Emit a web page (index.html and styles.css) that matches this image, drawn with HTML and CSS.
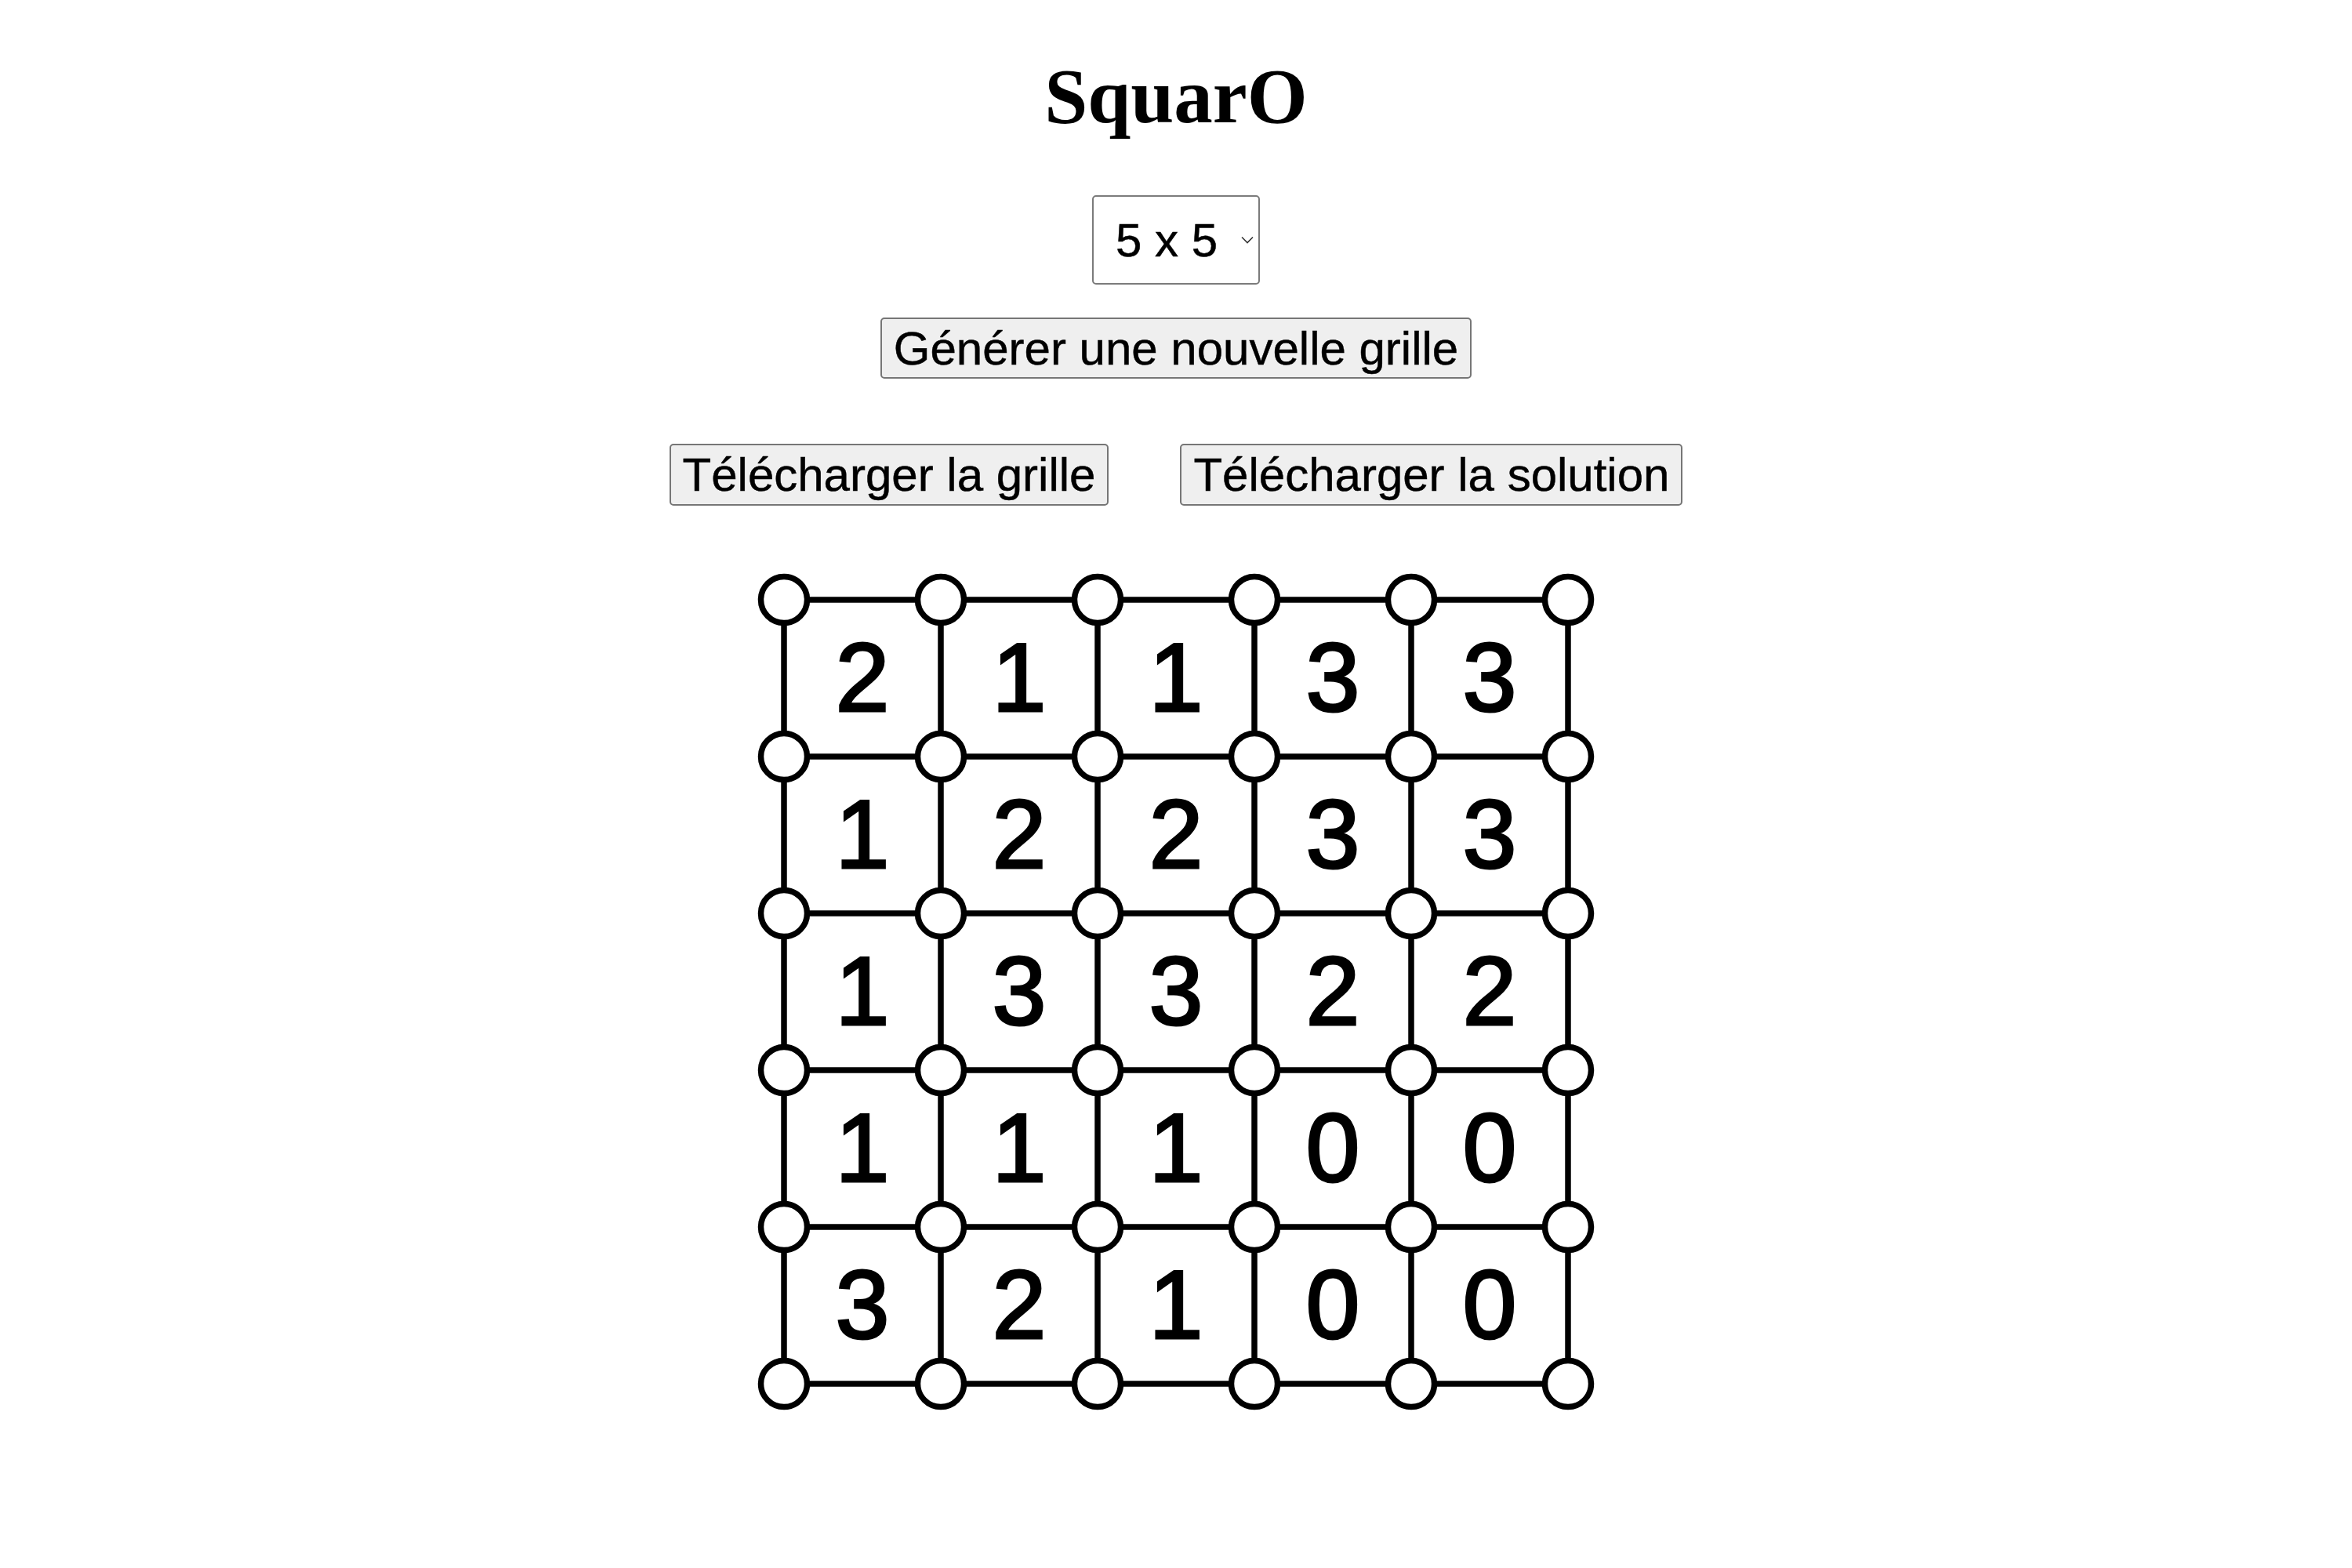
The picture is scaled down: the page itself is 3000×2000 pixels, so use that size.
FILE: index.html
```html
<!DOCTYPE html>
<html lang="fr">
<head>
<meta charset="utf-8">
<title>SquarO</title>
<link rel="stylesheet" href="styles.css">
</head>
<body>
<main class="page">
  <h1 class="title">SquarO</h1>
  <div class="select-wrap">
    <select class="size-select">
      <option>5 x 5</option>
      <option>6 x 6</option>
      <option>7 x 7</option>
    </select>
    <svg class="chevron" width="16" height="10" viewBox="0 0 16 10"><path d="M1 1.5 L8 8.5 L15 1.5" fill="none" stroke="#333" stroke-width="1.6"/></svg>
  </div>
  <button class="btn">Générer une nouvelle grille</button>
  <div class="btn-row">
    <button class="btn">Télécharger la grille</button>
    <button class="btn">Télécharger la solution</button>
  </div>
  <svg class="board" width="1080" height="1080" viewBox="0 0 1080 1080">
    <g stroke="#000" stroke-width="7.5">
      <line x1="40" y1="40" x2="1040" y2="40"/>
      <line x1="40" y1="240" x2="1040" y2="240"/>
      <line x1="40" y1="440" x2="1040" y2="440"/>
      <line x1="40" y1="640" x2="1040" y2="640"/>
      <line x1="40" y1="840" x2="1040" y2="840"/>
      <line x1="40" y1="1040" x2="1040" y2="1040"/>
      <line x1="40" y1="40" x2="40" y2="1040"/>
      <line x1="240" y1="40" x2="240" y2="1040"/>
      <line x1="440" y1="40" x2="440" y2="1040"/>
      <line x1="640" y1="40" x2="640" y2="1040"/>
      <line x1="840" y1="40" x2="840" y2="1040"/>
      <line x1="1040" y1="40" x2="1040" y2="1040"/>
    </g>
    <g class="nums" font-family="'Liberation Sans', Arial, sans-serif" font-size="124" text-anchor="middle" fill="#000" stroke="#000" stroke-width="3">
      <text x="140" y="182">2</text><text x="340" y="182">1</text><text x="540" y="182">1</text><text x="740" y="182">3</text><text x="940" y="182">3</text>
      <text x="140" y="382">1</text><text x="340" y="382">2</text><text x="540" y="382">2</text><text x="740" y="382">3</text><text x="940" y="382">3</text>
      <text x="140" y="582">1</text><text x="340" y="582">3</text><text x="540" y="582">3</text><text x="740" y="582">2</text><text x="940" y="582">2</text>
      <text x="140" y="782">1</text><text x="340" y="782">1</text><text x="540" y="782">1</text><text x="740" y="782">0</text><text x="940" y="782">0</text>
      <text x="140" y="982">3</text><text x="340" y="982">2</text><text x="540" y="982">1</text><text x="740" y="982">0</text><text x="940" y="982">0</text>
    </g>
    <g fill="#fff" stroke="#000" stroke-width="7.5">
      <circle cx="40" cy="40" r="29.5"/><circle cx="240" cy="40" r="29.5"/><circle cx="440" cy="40" r="29.5"/><circle cx="640" cy="40" r="29.5"/><circle cx="840" cy="40" r="29.5"/><circle cx="1040" cy="40" r="29.5"/>
      <circle cx="40" cy="240" r="29.5"/><circle cx="240" cy="240" r="29.5"/><circle cx="440" cy="240" r="29.5"/><circle cx="640" cy="240" r="29.5"/><circle cx="840" cy="240" r="29.5"/><circle cx="1040" cy="240" r="29.5"/>
      <circle cx="40" cy="440" r="29.5"/><circle cx="240" cy="440" r="29.5"/><circle cx="440" cy="440" r="29.5"/><circle cx="640" cy="440" r="29.5"/><circle cx="840" cy="440" r="29.5"/><circle cx="1040" cy="440" r="29.5"/>
      <circle cx="40" cy="640" r="29.5"/><circle cx="240" cy="640" r="29.5"/><circle cx="440" cy="640" r="29.5"/><circle cx="640" cy="640" r="29.5"/><circle cx="840" cy="640" r="29.5"/><circle cx="1040" cy="640" r="29.5"/>
      <circle cx="40" cy="840" r="29.5"/><circle cx="240" cy="840" r="29.5"/><circle cx="440" cy="840" r="29.5"/><circle cx="640" cy="840" r="29.5"/><circle cx="840" cy="840" r="29.5"/><circle cx="1040" cy="840" r="29.5"/>
      <circle cx="40" cy="1040" r="29.5"/><circle cx="240" cy="1040" r="29.5"/><circle cx="440" cy="1040" r="29.5"/><circle cx="640" cy="1040" r="29.5"/><circle cx="840" cy="1040" r="29.5"/><circle cx="1040" cy="1040" r="29.5"/>
    </g>
  </svg>
</main>
</body>
</html>
```
FILE: styles.css
```css
html, body {
  margin: 0;
  padding: 0;
  background: #ffffff;
}

.page {
  display: flex;
  flex-direction: column;
  align-items: center;
  font-family: "Liberation Sans", Arial, sans-serif;
  color: #000;
}

.title {
  margin: 66px 0 0 0;
  font-family: "Liberation Serif", "Times New Roman", serif;
  font-weight: bold;
  font-size: 99px;
  line-height: 114px;
  color: #000;
}

.select-wrap {
  position: relative;
  margin-top: 69px;
  width: 214px;
  height: 114px;
}

.size-select {
  appearance: none;
  -webkit-appearance: none;
  box-sizing: border-box;
  width: 214px;
  height: 114px;
  margin: 0;
  padding: 0 0 0 28px;
  border: 2px solid #7b7b7b;
  border-radius: 5px;
  background: #ffffff;
  font-family: "Liberation Sans", Arial, sans-serif;
  font-size: 60px;
  color: #000;
  outline: none;
  -webkit-text-stroke: 0.5px #000;
}

.chevron {
  position: absolute;
  left: 190px;
  top: 52px;
  pointer-events: none;
}

.btn {
  box-sizing: border-box;
  height: 78px;
  margin: 0;
  padding: 0 15px;
  border: 2px solid #767676;
  border-radius: 5px;
  background: #efefef;
  font-family: "Liberation Sans", Arial, sans-serif;
  font-size: 60px;
  line-height: 69px;
  color: #000;
  white-space: nowrap;
  -webkit-text-stroke: 0.5px #000;
}

.select-wrap + .btn {
  margin-top: 42px;
}

.btn-row {
  display: flex;
  gap: 91px;
  margin-top: 83px;
}

.btn-row .btn {
  height: 79px;
}

.board {
  display: block;
  margin-top: 80px;
}
```
